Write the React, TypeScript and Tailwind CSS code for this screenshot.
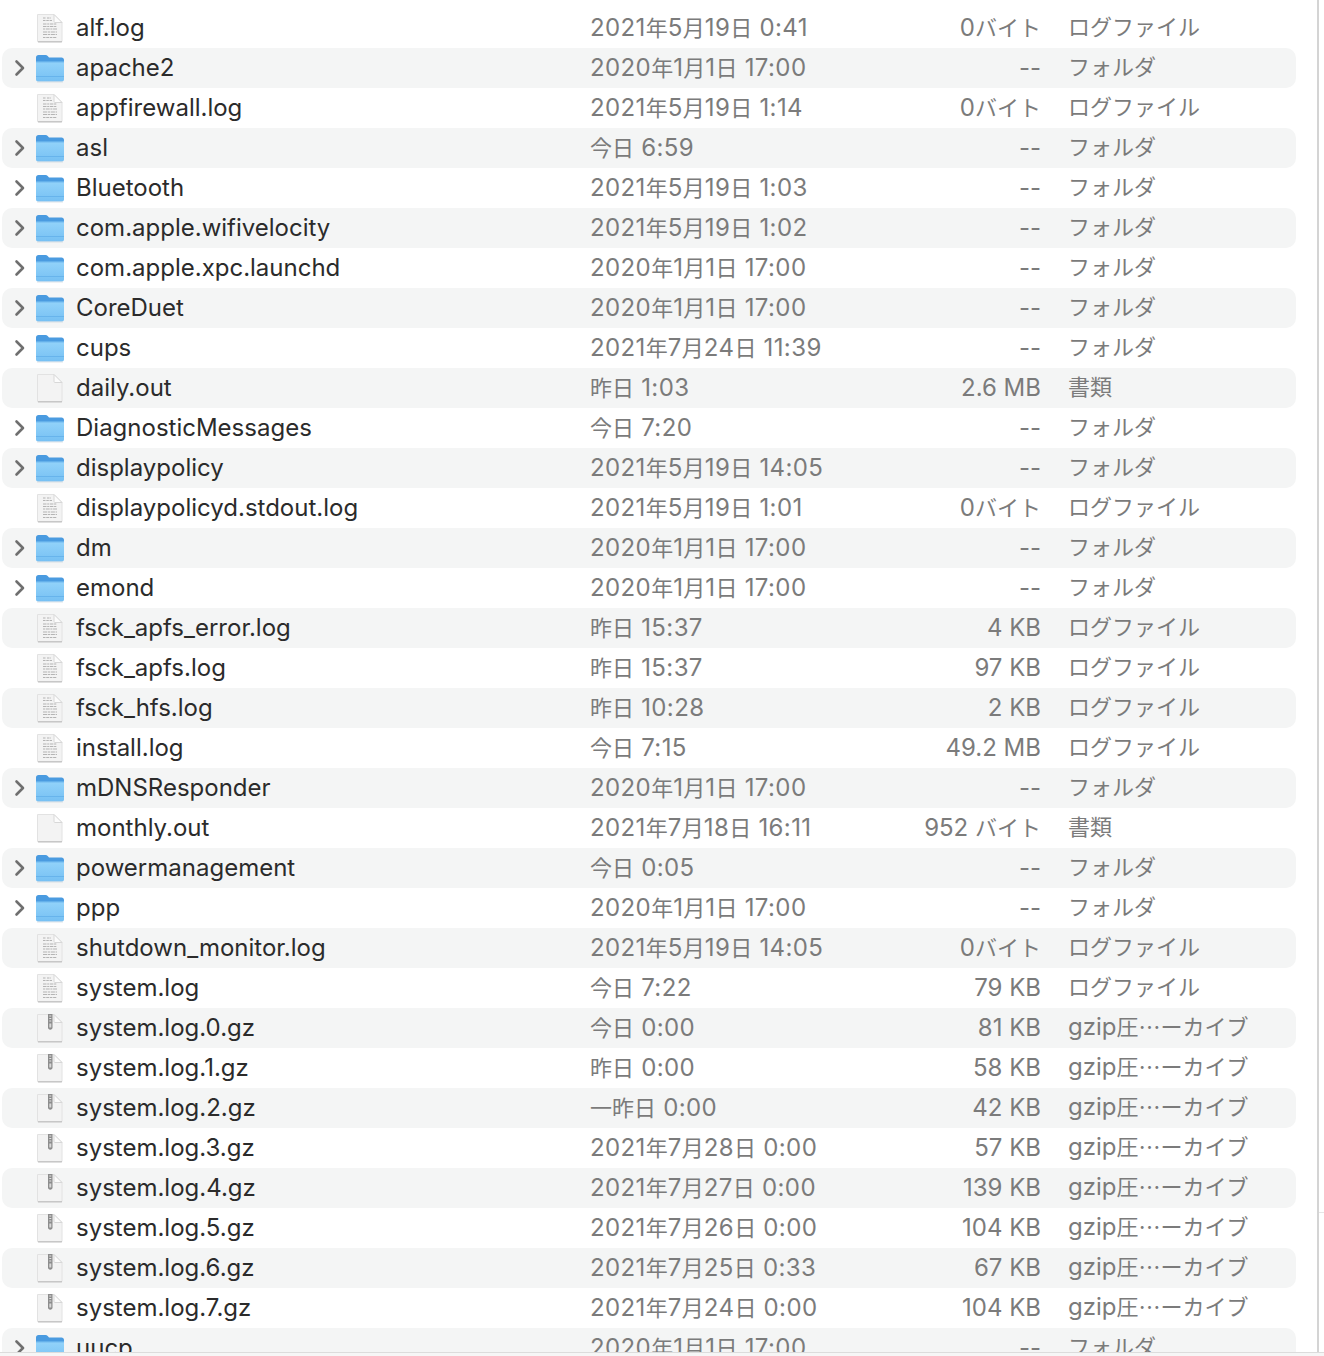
import React from "react";

type Kind = "folder" | "log" | "doc" | "gz";

const KIND_LABEL: Record<Kind, string> = {
  folder: "フォルダ",
  log: "ログファイル",
  doc: "書類",
  gz: "gzip圧…ーカイブ",
};

const FILES: [string, Kind, string, string][] = [
  ["alf.log", "log", "2021年5月19日 0:41", "0バイト"],
  ["apache2", "folder", "2020年1月1日 17:00", "--"],
  ["appfirewall.log", "log", "2021年5月19日 1:14", "0バイト"],
  ["asl", "folder", "今日 6:59", "--"],
  ["Bluetooth", "folder", "2021年5月19日 1:03", "--"],
  ["com.apple.wifivelocity", "folder", "2021年5月19日 1:02", "--"],
  ["com.apple.xpc.launchd", "folder", "2020年1月1日 17:00", "--"],
  ["CoreDuet", "folder", "2020年1月1日 17:00", "--"],
  ["cups", "folder", "2021年7月24日 11:39", "--"],
  ["daily.out", "doc", "昨日 1:03", "2.6 MB"],
  ["DiagnosticMessages", "folder", "今日 7:20", "--"],
  ["displaypolicy", "folder", "2021年5月19日 14:05", "--"],
  ["displaypolicyd.stdout.log", "log", "2021年5月19日 1:01", "0バイト"],
  ["dm", "folder", "2020年1月1日 17:00", "--"],
  ["emond", "folder", "2020年1月1日 17:00", "--"],
  ["fsck_apfs_error.log", "log", "昨日 15:37", "4 KB"],
  ["fsck_apfs.log", "log", "昨日 15:37", "97 KB"],
  ["fsck_hfs.log", "log", "昨日 10:28", "2 KB"],
  ["install.log", "log", "今日 7:15", "49.2 MB"],
  ["mDNSResponder", "folder", "2020年1月1日 17:00", "--"],
  ["monthly.out", "doc", "2021年7月18日 16:11", "952 バイト"],
  ["powermanagement", "folder", "今日 0:05", "--"],
  ["ppp", "folder", "2020年1月1日 17:00", "--"],
  ["shutdown_monitor.log", "log", "2021年5月19日 14:05", "0バイト"],
  ["system.log", "log", "今日 7:22", "79 KB"],
  ["system.log.0.gz", "gz", "今日 0:00", "81 KB"],
  ["system.log.1.gz", "gz", "昨日 0:00", "58 KB"],
  ["system.log.2.gz", "gz", "一昨日 0:00", "42 KB"],
  ["system.log.3.gz", "gz", "2021年7月28日 0:00", "57 KB"],
  ["system.log.4.gz", "gz", "2021年7月27日 0:00", "139 KB"],
  ["system.log.5.gz", "gz", "2021年7月26日 0:00", "104 KB"],
  ["system.log.6.gz", "gz", "2021年7月25日 0:33", "67 KB"],
  ["system.log.7.gz", "gz", "2021年7月24日 0:00", "104 KB"],
  ["uucp", "folder", "2020年1月1日 17:00", "--"],
];

// Japanese runs are set smaller than the latin text next to them
const Mixed = ({ text }: { text: string }) => (
  <>
    {text.split(/([\u3000-\u9fff…]+)/).map((part, i) =>
      i % 2 === 1 ? (
        <span key={i} className="font-['Noto_Sans_CJK_JP',sans-serif] text-[22px] leading-none tracking-normal">
          {part}
        </span>
      ) : (
        part
      )
    )}
  </>
);

const FolderIcon = () => (
  <svg width="32" height="30" viewBox="0 0 32 30">
    <defs>
      <linearGradient id="folderBody" x1="0" y1="0" x2="0" y2="1">
        <stop offset="0" stopColor="#93d3fa" />
        <stop offset="1" stopColor="#76c0f3" />
      </linearGradient>
    </defs>
    <path d="M2 4.500C2 3 3 2 4.500 2h7c1 0 1.600.4 2.200 1l1.300 1.500h12.500c1.500 0 2.500 1 2.500 2.500v4H2z" fill="#4a9be0" />
    <path d="M2 8.500h28v18c0 1.200-.9 2-2 2H4c-1.100 0-2-.8-2-2z" fill="url(#folderBody)" />
    <path d="M2 8.500h28v.8H2z" fill="#5aa8e6" />
    <path d="M2 23h28v.8H2z" fill="#62b0ea" />
    <path d="M3 28.700h26v.6H3z" fill="#c8d0d6" />
  </svg>
);

const Sheet = ({ children }: { children?: React.ReactNode }) => (
  <svg width="28" height="30" viewBox="0 0 28 30">
    <path d="M1.500 1.500h16.500l8 8V28c0 .6-.4 1-1 1H2.500c-.6 0-1-.4-1-1z" fill="#f3f3f3" stroke="#e2e2e2" strokeWidth="1" />
    <path d="M2 28.800h24" stroke="#b8b8b8" strokeWidth="1" />
    <path d="M18 1.500v7c0 .6.400 1 1 1h7z" fill="#fcfcfc" stroke="#d8d8d8" strokeWidth="1" />
    {children}
  </svg>
);

const LogIcon = () => (
  <Sheet>
    <g stroke="#b4b4b4" strokeWidth="1.100">
      <path d="M7 5h3M11 5h4M7 7.500h9" strokeDasharray="2.500 .8" />
      <path d="M7 11h14M7 13.500h14" strokeDasharray="3.500 .7 2 .7" />
      <path d="M7 16h14" strokeDasharray="2 .7 4 .7" />
      <path d="M7 19h14M7 21.500h14" strokeDasharray="4 .7 2.500 .7" />
      <path d="M7 24.500h14" strokeDasharray="2.500 .7 3 .7" />
    </g>
  </Sheet>
);

const ZipIcon = () => (
  <Sheet>
    <path d="M12 1h4.500v13.500c0 1.400-.9 2.200-2.250 2.200S12 15.900 12 14.500z" fill="#8c8c8c" />
    <path d="M13.300 3h2M13.300 5.500h2M13.300 8h2" stroke="#e4e4e4" strokeWidth="1" />
    <rect x="13.300" y="10.500" width="2" height="4" fill="#d8d8d8" />
  </Sheet>
);

const Chevron = () => (
  <svg width="12" height="18" viewBox="0 0 12 18" fill="none">
    <path d="M2.500 2.500 9 9l-6.500 6.500" stroke="#6f6f6f" strokeWidth="2.600" strokeLinecap="round" strokeLinejoin="round" />
  </svg>
);

const Row = ({ file, striped }: { file: (typeof FILES)[number]; striped: boolean }) => {
  const [name, kind, date, size] = file;
  return (
    <div className={`ml-[2px] flex h-10 w-[1294px] shrink-0 items-center rounded-[10px] ${striped ? "bg-[#f4f5f5]" : ""}`}>
      <div className="flex w-[32px] shrink-0 justify-end pr-[8px]">{kind === "folder" && <Chevron />}</div>
      <div className="flex w-[32px] shrink-0 justify-center">
        {kind === "folder" && <FolderIcon />}
        {kind === "log" && <LogIcon />}
        {kind === "doc" && <Sheet />}
        {kind === "gz" && <ZipIcon />}
      </div>
      <div className="ml-[10px] w-[514px] shrink-0 text-[#2b2b2b]">{name}</div>
      <div className="w-[380px] shrink-0 tracking-[0.4px] text-[#7b7b7b]">
        <Mixed text={date} />
      </div>
      <div className="w-[71px] shrink-0 text-[#7b7b7b]">
        <div className="float-right whitespace-nowrap">
          <Mixed text={size} />
        </div>
      </div>
      <div className="ml-[27px] whitespace-nowrap pb-[2px] text-[#7b7b7b]">
        <Mixed text={KIND_LABEL[kind]} />
      </div>
    </div>
  );
};

export default function App() {
  return (
    <div className="flex h-[1356px] flex-col overflow-hidden bg-white font-['Inter','Noto_Sans_CJK_JP',sans-serif] text-[24px] leading-10">
      <div className="flex min-h-0 flex-1">
        <div className="flex w-[1317px] shrink-0 flex-col overflow-hidden pt-2">
          {FILES.map((file, i) => (
            <Row key={file[0]} file={file} striped={i % 2 === 1} />
          ))}
        </div>
        <div className="flex-1 border-l-2 border-[#d4d4d4] pt-[1212px]">
          <div className="h-px bg-[#e6e6e6]" />
        </div>
      </div>
      <div className="h-[4px] shrink-0 border-t border-[#dcdcdc] bg-[#f6f6f6]" />
    </div>
  );
}
